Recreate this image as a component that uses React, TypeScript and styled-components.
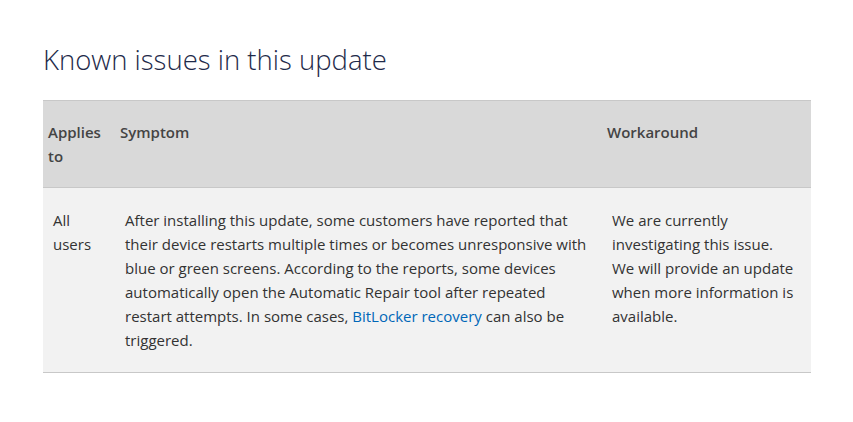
import React from "react";
import styled, { createGlobalStyle } from "styled-components";

const Global = createGlobalStyle`
  html, body { margin: 0; padding: 0; background: #ffffff; }
  body { font-family: "Open Sans", "Noto Sans", sans-serif; color: #333333; }
`;

const Page = styled.main`
  padding: 41px 42px 0 43px;
  width: 768px;
`;

const Title = styled.h2`
  margin: 0 0 21px 0;
  font-family: "Open Sans", sans-serif;
  font-weight: 300;
  font-size: 27.5px;
  line-height: 38px;
  color: #1e2a4a;
`;

const Table = styled.table`
  width: 768px;
  border-collapse: collapse;
  table-layout: fixed;
  font-size: 15px;
  line-height: 24px;
`;

const HeadRow = styled.tr`
  background: #d9d9d9;
  border-top: 1px solid #c8c8c8;
  border-bottom: 1px solid #c8c8c8;
`;

const BodyRow = styled.tr`
  background: #f2f2f2;
  border-bottom: 1px solid #c8c8c8;
`;

const Th = styled.th`
  text-align: left;
  vertical-align: top;
  font-weight: 600;
  color: #444444;
  padding: 19px 5px 19px 5px;
`;

const Td = styled.td`
  vertical-align: top;
  padding: 20px 13px 20px 10px;
  color: #333333;
`;

const Link = styled.a`
  color: #0067b8;
  text-decoration: none;
`;

export default function App() {
  return (
    <>
      <Global />
      <Page>
        <Title>Known issues in this update</Title>
        <Table>
          <colgroup>
            <col style={{ width: 72 }} />
            <col style={{ width: 487 }} />
            <col style={{ width: 209 }} />
          </colgroup>
          <thead>
            <HeadRow>
              <Th>Applies to</Th>
              <Th>Symptom</Th>
              <Th>Workaround</Th>
            </HeadRow>
          </thead>
          <tbody>
            <BodyRow>
              <Td>All users</Td>
              <Td>
                After installing this update, some customers have reported that
                their device restarts multiple times or becomes unresponsive with
                blue or green screens. According to the reports, some devices
                automatically open the Automatic Repair tool after repeated
                restart attempts. In some cases, <Link href="#">BitLocker recovery</Link> can
                also be triggered.
              </Td>
              <Td>
                We are currently investigating this issue. We will provide an
                update when more information is available.
              </Td>
            </BodyRow>
          </tbody>
        </Table>
      </Page>
    </>
  );
}
